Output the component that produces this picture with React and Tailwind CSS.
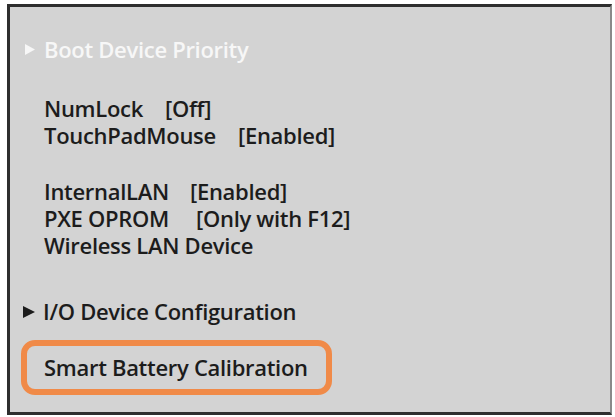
const Tri = ({ color, w = 10, h = 11 }) => (
  <svg width={w} height={h} viewBox={`0 0 ${w} ${h}`} className="shrink-0">
    <polygon points={`0,0 ${w},${h / 2} 0,${h}`} fill={color} />
  </svg>
);

const groups = [
  [
    ["NumLock", "[Off]", "w-[121px]"],
    ["TouchPadMouse", "[Enabled]", "w-[194px]"],
  ],
  [
    ["InternalLAN", "[Enabled]", "w-[146px]"],
    ["PXE OPROM", "[Only with F12]", "w-[152px]"],
    ["Wireless LAN Device", "", ""],
  ],
];

export default function App() {
  return (
    <div className="w-[615px] h-[417px] bg-white pt-[4px] pl-[7px] font-['Open_Sans',sans-serif]">
      <div className="w-[605px] h-[411px] bg-[#d3d3d3] border-[3px] border-[#2e2e2e] border-r-[#8a8a8a] border-r-2 flex flex-col pt-[29px] text-[22px] leading-[27px] font-semibold text-[#1c1c1c] tracking-[-0.3px]">
        {/* Boot Device Priority */}
        <div className="flex items-center gap-[9px] pl-[15px] text-[#f7f7f7]">
          <Tri color="#f7f7f7" />
          <span>Boot Device Priority</span>
        </div>

        {groups.map((rows, gi) => (
          <div key={gi} className={gi === 0 ? "mt-[32px] pl-[34px]" : "mt-[29px] pl-[34px]"}>
            {rows.map(([label, value, w]) => (
              <div key={label} className="flex">
                <span className={w}>{label}</span>
                {value && <span>{value}</span>}
              </div>
            ))}
          </div>
        ))}

        {/* I/O Device Configuration */}
        <div className="mt-[39px] flex items-center gap-[8px] pl-[13px]">
          <Tri color="#1c1c1c" w={12} h={12} />
          <span>I/O Device Configuration</span>
        </div>

        {/* Smart Battery Calibration */}
        <div className="mt-[15px] ml-[11px] w-[311px] h-[55px] border-[6px] border-[#f08a48] rounded-[14px] flex items-center pl-[17px]">
          Smart Battery Calibration
        </div>
      </div>
    </div>
  );
}
